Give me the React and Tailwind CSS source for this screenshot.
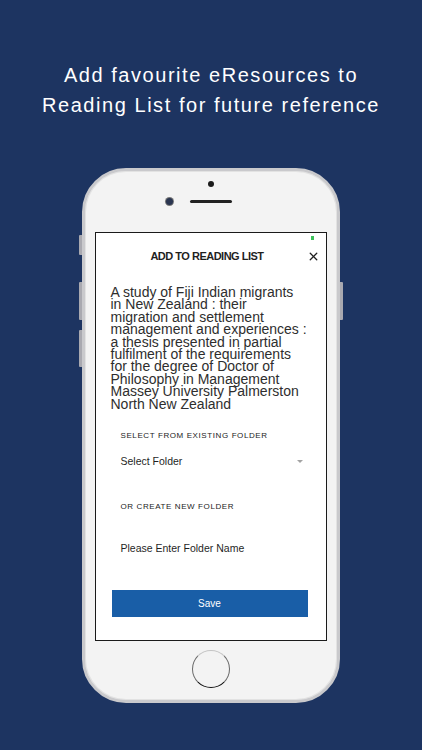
import { X } from 'lucide-react'

const titleLines = [
  'A study of Fiji Indian migrants',
  'in New Zealand : their',
  'migration and settlement',
  'management and experiences :',
  'a thesis presented in partial',
  'fulfilment of the requirements',
  'for the degree of Doctor of',
  'Philosophy in Management',
  'Massey University Palmerston',
  'North New Zealand',
]

function ReadingListScreen() {
  return (
    <div className="relative mx-auto flex h-[409px] w-[232px] flex-col border-[1.5px] border-[#1a1a1a] bg-white">
      <span className="absolute right-[12px] top-[3px] h-[4px] w-[3px] bg-[#3cc15a]" />

      <div className="relative mt-[13.5px] flex h-[20px] items-center justify-center pr-[8px]">
        <span className="text-[11px] font-bold tracking-[-0.5px] text-[#1f1f1f]">ADD TO READING LIST</span>
        <X className="absolute right-[6px] h-[13px] w-[13px] text-[#1f1f1f]" strokeWidth={2.4} />
      </div>

      <div className="mt-[19.5px] pl-[14.5px] text-[14px] leading-[12.4px] text-[#2e2e2e]">
        {titleLines.map((line) => (
          <span key={line} className="block whitespace-nowrap">{line}</span>
        ))}
      </div>

      <p className="mt-[20.5px] pl-[24.5px] text-[8px] leading-[10px] tracking-[0.6px] text-[#222]">
        SELECT FROM EXISTING FOLDER
      </p>
      <div className="mt-[14px] flex h-[14px] items-center justify-between pl-[24.5px] pr-[23.5px]">
        <span className="text-[10.5px] text-[#1f1f1f]">Select Folder</span>
        <span className="h-0 w-0 border-x-[3px] border-t-[3.5px] border-x-transparent border-t-[#a3a3a3]" />
      </div>

      <p className="mt-[33px] pl-[24.5px] text-[8px] leading-[10px] tracking-[0.6px] text-[#222]">
        OR CREATE NEW FOLDER
      </p>
      <div className="mt-[30px] flex h-[14px] items-center pl-[24.5px]">
        <span className="text-[10.5px] text-[#1f1f1f]">Please Enter Folder Name</span>
      </div>

      <button
        type="button"
        className="ml-[15.5px] mt-[34px] flex h-[27px] w-[196px] items-center justify-center bg-[#195ea7] text-[10px] text-white"
      >
        Save
      </button>
    </div>
  )
}

function Phone() {
  return (
    <div className="relative ml-[82px] mt-[48px] h-[535px] w-[258px]">
      <span className="absolute -left-[3px] top-[67px] h-[20px] w-[3px] rounded-l-[1px] bg-[#a9a9b0]" />
      <span className="absolute -left-[3px] top-[114px] h-[38px] w-[3px] rounded-l-[1px] bg-[#a9a9b0]" />
      <span className="absolute -left-[3px] top-[162px] h-[37px] w-[3px] rounded-l-[1px] bg-[#a9a9b0]" />
      <span className="absolute -right-[3px] top-[114px] h-[38px] w-[3px] rounded-r-[1px] bg-[#a9a9b0]" />

      <div className="flex h-full w-full flex-col rounded-[44px] border-[3px] border-[#c9c9cc] bg-[#f3f3f3] shadow-[inset_0_0_0_1px_#e2e2e2]">
        <div className="flex h-[61px] flex-col items-center">
          <span className="mt-[10px] h-[6px] w-[6px] rounded-full bg-[#1b1b1b]" />
          <div className="mt-[11px] flex items-center">
            <span className="h-[7px] w-[7px] rounded-full bg-[#2a3550] shadow-[0_0_0_1px_#777]" />
            <span className="ml-[17.5px] h-[3px] w-[42px] rounded-full bg-[#222]" />
            <span className="ml-[17.5px] w-[7px]" />
          </div>
        </div>

        <ReadingListScreen />

        <div className="flex flex-1 justify-center">
          <span className="mt-[9px] h-[38px] w-[38px] rounded-full border-[1.5px] border-b-[#111] border-l-[#666] border-r-[#666] border-t-[#c4c4c4] bg-[#f3f3f3]" />
        </div>
      </div>
    </div>
  )
}

export default function App() {
  return (
    <div className="h-[750px] w-[422px] overflow-hidden bg-[#1d3461] font-['Liberation_Sans',Arial,sans-serif]">
      <h1 className="pt-[60px] text-center text-[20px] leading-[30px] tracking-[1.55px] text-white">
        Add favourite eResources to
        <br />
        Reading List for future reference
      </h1>
      <Phone />
    </div>
  )
}
